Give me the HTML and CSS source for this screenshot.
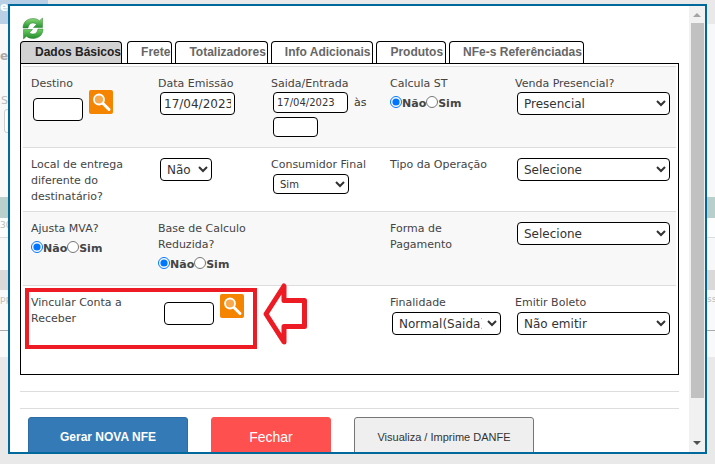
FILE: index.html
```html
<!DOCTYPE html>
<html lang="pt">
<head>
<meta charset="utf-8">
<title>Gerar NFE</title>
<link rel="stylesheet" href="styles.css">
</head>
<body>
<div class="backdrop">
  <div class="bg-a"><span class="bg-e">e</span></div>
  <div class="bg-b"><span class="bg-e2">e</span><span class="bg-s">S</span><span class="bg-input"></span></div>
  <div class="bg-c"></div>
  <div class="bg-d"><span class="bg-30">30</span></div>
  <div class="bg-f"></div>
  <div class="bg-g"></div>
  <div class="bg-h"><span class="bg-pp">pp</span><span class="bg-ss">ss</span></div>
  <div class="bg-i"></div>
  <div class="bg-j"></div>
</div>

<div class="modal">
  <div class="content">
    <svg class="refresh" width="22" height="23" viewBox="0 0 22 23" aria-hidden="true">
      <defs>
        <linearGradient id="g1" x1="0" y1="0" x2="0" y2="1">
          <stop offset="0" stop-color="#8fdc7a"/>
          <stop offset="1" stop-color="#1f8f2c"/>
        </linearGradient>
        <linearGradient id="g2" x1="0" y1="1" x2="0" y2="0">
          <stop offset="0" stop-color="#1f8a2a"/>
          <stop offset="1" stop-color="#6fcf62"/>
        </linearGradient>
      </defs>
      <path fill="url(#g1)" stroke="#2a7d30" stroke-width=".5" d="M1 11C1 5 5.500 1.500 11 1.500C14 1.500 16 2.500 17.500 3.800L20.500 1V10.500H11.500L14.500 7.500C13.500 6.500 12.300 6 10.800 6C8 6 6.500 8 6 11Z"/>
      <path fill="url(#g2)" stroke="#2a7d30" stroke-width=".5" d="M21 12C21 18 16.500 21.500 11 21.500C8 21.500 6 20.500 4.500 19.200L1.500 22V12.500H10.500L7.500 15.500C8.500 16.500 9.700 17 11.200 17C14 17 15.500 15 16 12Z"/>
    </svg>

    <div class="tabs">
      <a class="tab active">Dados Básicos</a>
      <a class="tab">Frete</a>
      <a class="tab">Totalizadores</a>
      <a class="tab t-wide">Info Adicionais</a>
      <a class="tab t-wide">Produtos</a>
      <a class="tab">NFe-s Referênciadas</a>
    </div>

    <div class="panel">
      <div class="row row1 alt">
        <div class="cell">
          <div class="lbl">Destino</div>
          <div class="inline">
            <input class="inp w50 dest" type="text">
            <svg class="lupa" width="24" height="24" viewBox="0 0 24 24" aria-hidden="true"><rect width="24" height="24" rx="2" fill="#f58400"/><circle cx="10" cy="9.500" r="5" fill="#f9a94d" stroke="#fff" stroke-width="1.800"/><path d="M14 13.500L20 19.500" stroke="#fff" stroke-width="3" stroke-linecap="round"/></svg>
          </div>
        </div>
        <div class="cell">
          <div class="lbl">Data Emissão</div>
          <input class="inp date-big" type="text" value="17/04/2023">
        </div>
        <div class="cell">
          <div class="lbl">Saida/Entrada</div>
          <div class="date-line"><input class="inp date-small" type="text" value="17/04/2023"><span class="as">às</span></div>
          <input class="inp time" type="text">
        </div>
        <div class="cell">
          <div class="lbl">Calcula ST</div>
          <div class="radios"><input type="radio" name="st" checked><b>Não</b><input type="radio" name="st"><b>Sim</b></div>
        </div>
        <div class="cell">
          <div class="lbl">Venda Presencial?</div>
          <select class="sel wide top1"><option>Presencial</option></select>
        </div>
      </div>

      <div class="row row2">
        <div class="cell"><div class="lbl narrow">Local de entrega diferente do destinatário?</div></div>
        <div class="cell"><select class="sel w52"><option>Não</option></select></div>
        <div class="cell">
          <div class="lbl">Consumidor Final</div>
          <select class="sel small"><option>Sim</option></select>
        </div>
        <div class="cell"><div class="lbl">Tipo da Operação</div></div>
        <div class="cell"><select class="sel wide"><option>Selecione</option></select></div>
      </div>

      <div class="row row3 alt">
        <div class="cell">
          <div class="lbl">Ajusta MVA?</div>
          <div class="radios"><input type="radio" name="mva" checked><b>Não</b><input type="radio" name="mva"><b>Sim</b></div>
        </div>
        <div class="cell">
          <div class="lbl">Base de Calculo Reduzida?</div>
          <div class="radios"><input type="radio" name="base" checked><b>Não</b><input type="radio" name="base"><b>Sim</b></div>
        </div>
        <div class="cell"></div>
        <div class="cell"><div class="lbl narrow2">Forma de Pagamento</div></div>
        <div class="cell"><select class="sel wide"><option>Selecione</option></select></div>
      </div>

      <div class="row row4">
        <div class="cell"><div class="lbl">Vincular Conta a Receber</div></div>
        <div class="cell">
          <div class="inline">
            <input class="inp w50 vinc" type="text">
            <svg class="lupa lupa4" width="24" height="24" viewBox="0 0 24 24" aria-hidden="true"><rect width="24" height="24" rx="2" fill="#f58400"/><circle cx="10" cy="9.500" r="5" fill="#f9a94d" stroke="#fff" stroke-width="1.800"/><path d="M14 13.500L20 19.500" stroke="#fff" stroke-width="3" stroke-linecap="round"/></svg>
          </div>
        </div>
        <div class="cell"></div>
        <div class="cell">
          <div class="lbl">Finalidade</div>
          <select class="sel fin"><option>Normal(Saida)</option></select>
        </div>
        <div class="cell">
          <div class="lbl">Emitir Boleto</div>
          <select class="sel wide"><option>Não emitir</option></select>
        </div>
      </div>
    </div>

    <hr class="rule r1">
    <hr class="rule r2">

    <div class="actions">
      <button class="btn primary">Gerar NOVA NFE</button>
      <button class="btn danger">Fechar</button>
      <button class="btn plain">Visualiza / Imprime DANFE</button>
    </div>
  </div>

  <div class="scrollbar">
    <span class="arrow up"></span>
    <div class="track"><div class="thumb"></div></div>
    <span class="arrow down"></span>
  </div>

  <div class="highlight"></div>
  <svg class="pointer" width="60" height="70" viewBox="0 0 60 70" aria-hidden="true">
    <path d="M6 33L24 5V19.500H44.500V45.500H24V61Z" fill="none" stroke="#ed1c24" stroke-width="5" stroke-linejoin="round"/>
  </svg>
</div>
</body>
</html>
```
FILE: styles.css
```css
* { box-sizing: border-box; }
html, body { margin: 0; padding: 0; }
body {
  width: 715px;
  height: 464px;
  overflow: hidden;
  background: #e9e9e9;
  font-family: "DejaVu Sans", sans-serif;
  font-size: 11px;
  color: #333;
}

/* dimmed page behind the dialog */
.backdrop { display: flex; flex-direction: column; height: 100%; color: #bbb; }
.bg-a { height: 24px; width: 48px; background: #b8cfe5; color: #fff; font-weight: bold; font-size: 12px; line-height: 14px; }
.bg-b { height: 173px; background: #f8f8f8; display: flex; flex-direction: column; }
.bg-e2 { font-size: 12px; font-weight: bold; margin: 24px 0 0 0; line-height: 16px; color: #aaa; }
.bg-s { margin: 30px 0 0 1px; line-height: 14px; font-size: 11px; }
.bg-input { width: 12px; height: 24px; margin: 1px 0 0 4px; border: 1px solid #ccc; border-radius: 3px; background: #fff; }
.bg-c { height: 21px; background: #b9cfcb; }
.bg-d { height: 20px; background: #fdfdfd; border-bottom: 1px solid #ddd; font-size: 9px; line-height: 14px; }
.bg-30 { display: block; }
.bg-f { height: 32px; background: #f8f8f8; }
.bg-g { height: 20px; background: #d9d9d9; }
.bg-h { height: 41px; background: #f9f9f9; border-bottom: 1px solid #aaa; position: relative; font-size: 9px; }
.bg-pp { position: absolute; left: 0; top: 4px; }
.bg-ss { position: absolute; left: 707px; top: 4px; }
.bg-i { height: 26px; background: #f9f9f9; }
.bg-j { flex: 1; background: #e9e9e9; }

/* dialog */
.modal {
  position: absolute;
  left: 8px;
  top: 4px;
  width: 699px;
  height: 450px;
  border: 2px solid #00689b;
  background: #fff;
  display: flex;
  overflow: hidden;
}
.content { flex: 1; min-width: 0; padding: 11px 10px 0; overflow: hidden; }
.refresh { display: block; margin-left: 2px; height: 23px; margin-bottom: 1px; }

.tabs { display: flex; height: 22px; gap: 3px; }
.tab {
  display: block;
  padding: 0 1px 0 13px;
  border: 1px solid #000;
  border-bottom: 0;
  border-radius: 4px 4px 0 0;
  font: bold 12px/20px "Liberation Sans", Arial, sans-serif;
  color: #666;
  background: #fff;
  white-space: nowrap;
}
.tab.active { color: #222; background: #d2d2d2; margin-right: 2px; padding: 0 0 0 14px; }
.t-wide { padding-right: 2px; }

.panel { border: 1px solid #000; padding: 2px 2px 0; height: 312px; }
.row {
  display: grid;
  grid-template-columns: 127px 113px 119px 125px 1fr;
  border-top: 1px solid #ddd;
  padding: 8px 0 0 8px;
  line-height: 16px;
}
.alt { background: #f8f8f8; }
.row1 { height: 81px; }
.row2 { height: 64px; }
.row3 { height: 74px; }
.row4 { height: 87px; }
.lbl { line-height: 16px; color: #444; padding-top: 1px; margin-bottom: -1px; }
.narrow { width: 105px; }
.narrow2 { width: 80px; }
.row4 .lbl { max-width: 115px; }

.inline { display: flex; align-items: flex-start; }
.inp {
  display: block;
  border: 1px solid #000;
  border-radius: 4px;
  background: #fff;
  padding: 0 3px;
  margin: 0 0 0 2px;
  color: #333;
  font-family: "DejaVu Sans", sans-serif;
}
.w50 { width: 50px; height: 23px; }
.dest { margin-top: 7px; }
.lupa { flex: none; margin-left: 6px; margin-top: -1px; display: block; }
.vinc { margin: 8px 0 0 6px; }
.lupa4 { margin-top: 0; }
.date-big { width: 75px; height: 23px; margin-top: 1px; font-size: 12px; }
.date-line { display: flex; align-items: center; margin-top: 1px; }
.date-small { width: 75px; height: 21px; font-size: 10px; }
.as { margin-left: 6px; line-height: 16px; }
.time { width: 45px; height: 20px; margin-top: 4px; }

.radios { display: flex; align-items: flex-start; height: 16px; margin-top: 5px; }
.radios input { width: 12px; height: 12px; margin: 0; flex: none; }
.radios b { font-weight: bold; color: #444; line-height: 16px; }

.sel {
  display: block;
  height: 23px;
  margin: 2px 0 0 2px;
  border: 1px solid #000;
  border-radius: 4px;
  background-color: #fff;
  color: #333;
  font: 12px "DejaVu Sans", sans-serif;
  padding: 0 2px;
}
.wide { width: 153px; }
.top1 { margin-top: 1px; }
.w52 { width: 52px; }
.small { width: 76px; height: 20px; font-size: 10px; margin-top: 2px; }
.fin { width: 109px; margin-top: 2px; }

.rule { border: 0; border-top: 1px solid #ddd; margin: 0; }
.r1 { margin-top: 16px; }
.r2 { margin-top: 16px; }

.actions { display: flex; margin: 8px 0 0 8px; gap: 23px; }
.btn {
  height: 40px;
  padding: 0;
  border-radius: 3px;
  font-family: "Liberation Sans", Arial, sans-serif;
  flex: none;
}
.primary { width: 160px; background: #337ab7; border: 1px solid #2e6da4; color: #fff; font-size: 12px; font-weight: bold; }
.danger { width: 120px; background: #ff5050; border: 1px solid #ff5050; color: #fff; font-size: 14px; }
.plain { width: 180px; background: #efefef; border: 1px solid #767676; color: #333; font-size: 11px; }

/* scrollbar */
.scrollbar { flex: none; width: 16px; background: #f1f1f1; display: flex; flex-direction: column; align-items: center; position: relative; }
.track { flex: 1; width: 100%; padding: 17px 1px 0 2px; }
.thumb { height: 375px; background: #c1c1c1; }
.arrow { position: absolute; left: 4px; width: 0; height: 0; border-left: 4px solid transparent; border-right: 4px solid transparent; }
.arrow.up { top: 7px; border-bottom: 4px solid #a3a3a3; }
.arrow.down { bottom: 7px; border-top: 4px solid #505050; }

/* annotations drawn on top of the screenshot */
.highlight {
  position: absolute;
  left: 15px;
  top: 282px;
  width: 232px;
  height: 61px;
  border: 4.500px solid #ed1c24;
}
.pointer { position: absolute; left: 250px; top: 275px; }
```
